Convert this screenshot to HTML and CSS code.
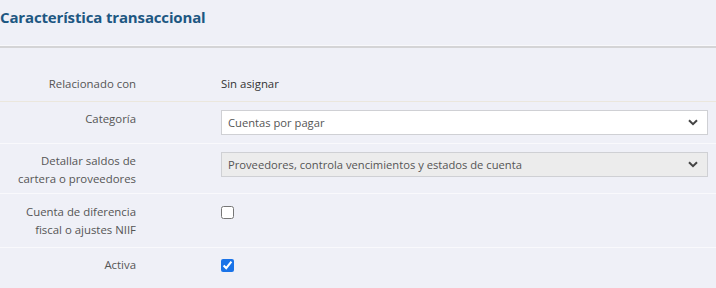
FILE: index.html
```html
<!DOCTYPE html>
<html lang="es">

<head>
    <meta charset="UTF-8">
    <meta name="viewport" content="width=device-width, initial-scale=1.0">
    <title>Característica transaccional</title>
    <link rel="stylesheet" href="styles.css">
</head>

<body>
    <header class="panel-head">
        <h2>Característica transaccional</h2>
    </header>

    <div class="form">
        <div class="row first">
            <label class="label">Relacionado con</label>
            <div class="value"><span class="plain">Sin asignar</span></div>
        </div>

        <div class="row">
            <label class="label" for="categoria">Categoría</label>
            <div class="value">
                <div class="select-wrap">
                    <select id="categoria">
                        <option>Cuentas por pagar</option>
                    </select>
                    <svg class="chevron" viewBox="0 0 10 7" width="10" height="7"><path d="M1 1.2 5 5.2 9 1.2" fill="none" stroke="#444" stroke-width="2"/></svg>
                </div>
            </div>
        </div>

        <div class="row tight">
            <label class="label" for="detalle">Detallar saldos de<br>cartera o proveedores</label>
            <div class="value">
                <div class="select-wrap">
                    <select id="detalle" disabled>
                        <option>Proveedores, controla vencimientos y estados de cuenta</option>
                    </select>
                    <svg class="chevron" viewBox="0 0 10 7" width="10" height="7"><path d="M1 1.2 5 5.2 9 1.2" fill="none" stroke="#444" stroke-width="2"/></svg>
                </div>
            </div>
        </div>

        <div class="row loose">
            <label class="label" for="niif">Cuenta de diferencia<br>fiscal o ajustes NIIF</label>
            <div class="value"><input type="checkbox" id="niif" class="check"></div>
        </div>

        <div class="row last">
            <label class="label" for="activa">Activa</label>
            <div class="value"><input type="checkbox" id="activa" class="check" checked></div>
        </div>
    </div>
</body>

</html>
```

FILE: styles.css
```css
body {
    font-family: 'Open Sans', 'Noto Sans', sans-serif;
    margin: 0;
    padding: 0;
    background: #eff0f7;
    color: #555555;
    font-size: 11.4px;
}

.panel-head {
    height: 46px;
    border-bottom: 2px solid #d4d4d6;
    box-shadow: 0 -1px 0 #f8f8fb inset;
}

.panel-head h2 {
    margin: 0;
    padding-top: 6px;
    font-size: 15px;
    line-height: 22px;
    font-weight: 700;
    color: #1d5782;
    letter-spacing: -0.15px;
}

.form {
    padding-top: 19px;
}

.row {
    display: grid;
    grid-template-columns: 136px 1fr;
    column-gap: 85px;
    padding: 8px 8px 8px 0;
    border-bottom: 1px solid #f9f9fc;
}

.row.first {
    border-bottom-color: #ebe7dd;
}

.row.tight {
    padding-bottom: 5px;
}

.row.loose {
    padding-top: 9px;
}

.row.last {
    border-bottom: none;
}

.label {
    text-align: right;
    line-height: 18px;
    color: #555555;
}

.value {
    display: flex;
    align-items: flex-start;
}

.plain {
    color: #333333;
    line-height: 18px;
}

.select-wrap {
    position: relative;
    width: 100%;
}

select {
    appearance: none;
    -webkit-appearance: none;
    width: 100%;
    height: 25px;
    padding: 0 24px 0 6px;
    border: 1px solid #cfd0d4;
    border-radius: 0;
    background: #ffffff;
    color: #555555;
    font-family: 'Open Sans', 'Noto Sans', sans-serif;
    font-size: 11.2px;
}

select:disabled {
    background: #ececec;
    color: #555555;
    opacity: 1;
}

.chevron {
    position: absolute;
    right: 10px;
    top: 9px;
    pointer-events: none;
}

.check {
    width: 13px;
    height: 13px;
    margin: 3px 0 0 0;
    accent-color: #1a73e8;
}
```
